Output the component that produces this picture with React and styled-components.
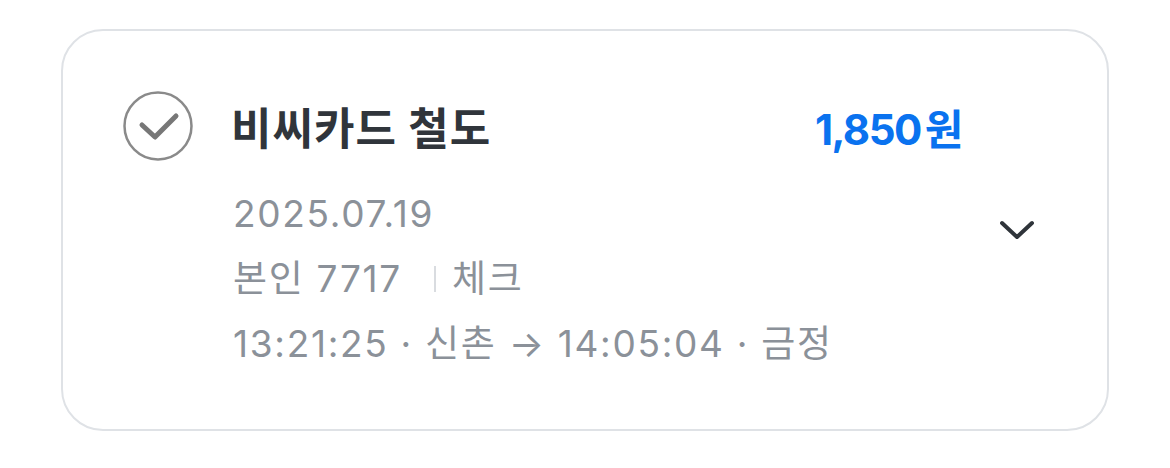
import React from 'react';
import styled, { createGlobalStyle } from 'styled-components';

const GlobalStyle = createGlobalStyle`
  html, body {
    margin: 0;
    padding: 0;
    background: #ffffff;
  }
  body {
    font-family: Inter, 'Noto Sans CJK KR', sans-serif;
  }
`;

const Page = styled.div`
  padding: 29px 61px 0;
`;

const Card = styled.div`
  box-sizing: border-box;
  width: 1048px;
  height: 402px;
  border: 2px solid #dfe2e6;
  border-radius: 42px;
  background: #ffffff;
  display: flex;
  align-items: center;
  padding: 0 72px 0 60px;
`;

const Body = styled.div`
  flex: 1;
  display: flex;
  flex-direction: column;
  align-self: stretch;
  padding-top: 60px;
`;

const Header = styled.div`
  display: flex;
  align-items: center;
  gap: 38px;
  height: 70px;
`;

const Title = styled.div`
  flex: 1;
  font-size: 44px;
  font-weight: 700;
  color: #30353b;
  letter-spacing: 1px;
`;

const Amount = styled.div`
  font-size: 42px;
  font-weight: 700;
  color: #0a72ef;
  letter-spacing: -1.5px;
  display: flex;
  align-items: baseline;
  gap: 4px;
`;

const Details = styled.div`
  display: flex;
  flex-direction: column;
  padding-left: 110px;
  margin-top: 20px;
`;

const Line = styled.div`
  font-size: 37px;
  line-height: 65px;
  color: #8b9199;
  display: flex;
  align-items: center;
  letter-spacing: 1.7px;
`;

const Divider = styled.span`
  display: inline-block;
  width: 2px;
  height: 26px;
  background: #d9dce0;
  margin: 0 16px 0 32px;
`;

const Toggle = styled.button`
  border: none;
  background: none;
  padding: 0;
  margin-left: 37px;
  display: flex;
  cursor: pointer;
`;

const CheckIcon = () => (
  <svg width="70" height="70" viewBox="0 0 70 70">
    <circle cx="35" cy="35" r="33.5" fill="none" stroke="#8a8a8a" strokeWidth="2.5" />
    <polyline
      points="19,34 32,46 53,25"
      fill="none"
      stroke="#777777"
      strokeWidth="5"
      strokeLinecap="round"
      strokeLinejoin="round"
    />
  </svg>
);

const ChevronIcon = () => (
  <svg width="36" height="24" viewBox="0 0 36 24">
    <polyline
      points="3,5 18,19 33,5"
      fill="none"
      stroke="#2f343a"
      strokeWidth="4"
      strokeLinecap="round"
      strokeLinejoin="round"
    />
  </svg>
);

export default function App() {
  return (
    <>
      <GlobalStyle />
      <Page>
        <Card>
          <Body>
            <Header>
              <CheckIcon />
              <Title>비씨카드 철도</Title>
              <Amount>
                <span>1,850</span>
                <span>원</span>
              </Amount>
            </Header>
            <Details>
              <Line>2025.07.19</Line>
              <Line>
                본인 7717
                <Divider />
                체크
              </Line>
              <Line>13:21:25 · 신촌 → 14:05:04 · 금정</Line>
            </Details>
          </Body>
          <Toggle aria-label="펼치기">
            <ChevronIcon />
          </Toggle>
        </Card>
      </Page>
    </>
  );
}
